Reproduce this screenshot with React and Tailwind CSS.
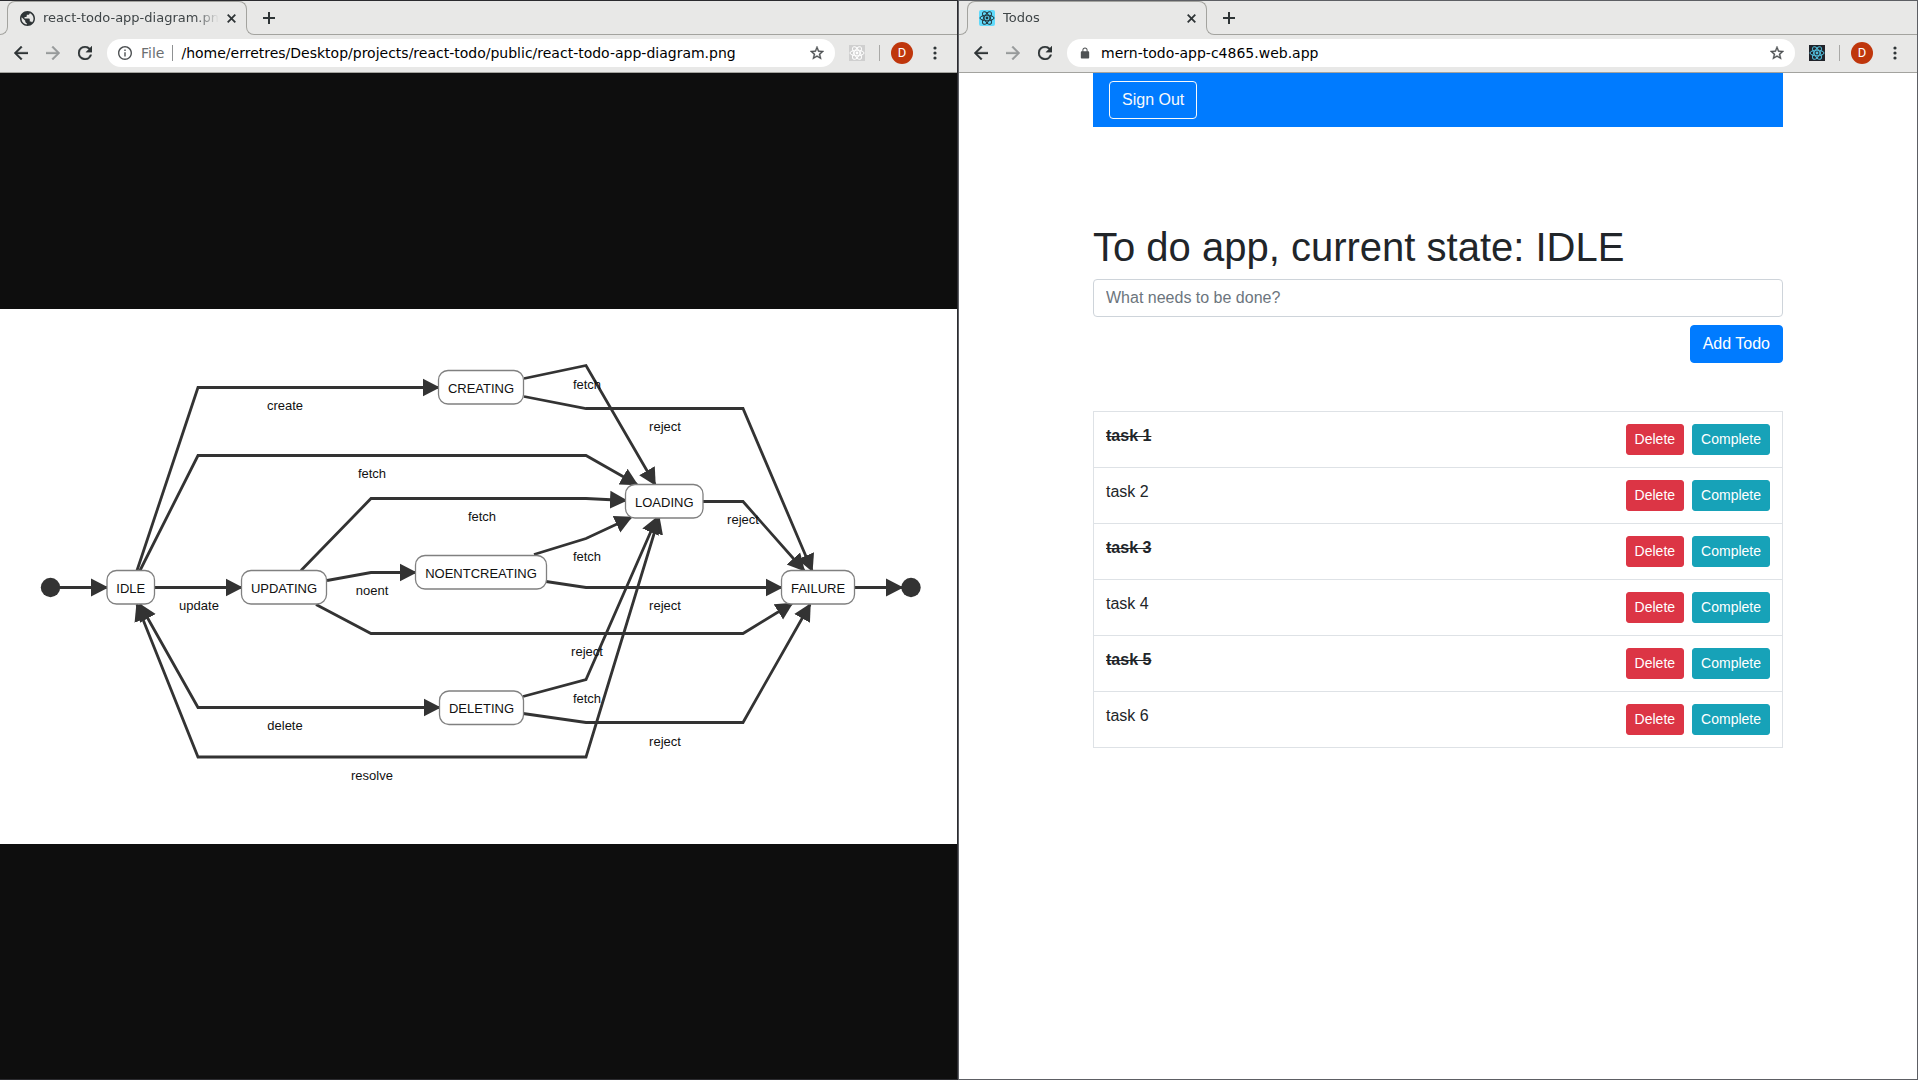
import React from "react";

const INK = "#2e3436";

function ReactLogo({ color, size }) {
  return (
    <svg width={size} height={size} viewBox="0 0 16 16" fill="none" stroke={color} strokeWidth="1" aria-hidden="true">
      <ellipse cx="8" cy="8" rx="7" ry="2.8" />
      <ellipse cx="8" cy="8" rx="7" ry="2.8" transform="rotate(60 8 8)" />
      <ellipse cx="8" cy="8" rx="7" ry="2.8" transform="rotate(120 8 8)" />
      <circle cx="8" cy="8" r="1.4" fill={color} stroke="none" />
    </svg>
  );
}

function GlobeIcon() {
  return (
    <svg width="15" height="15" viewBox="2 2 20 20" fill={INK} aria-hidden="true">
      <path d="M12 2C6.48 2 2 6.48 2 12s4.48 10 10 10 10-4.48 10-10S17.52 2 12 2zm-1 17.93c-3.95-.49-7-3.85-7-7.93 0-.62.08-1.21.21-1.79L9 15v1c0 1.100.9 2 2 2v1.930zm6.900-2.540c-.26-.81-1-1.390-1.900-1.390h-1v-3c0-.55-.45-1-1-1H8v-2h2c.55 0 1-.45 1-1V7h2c1.100 0 2-.9 2-2v-.410c2.930 1.190 5 4.060 5 7.410 0 2.080-.8 3.970-2.100 5.390z" />
    </svg>
  );
}

function BackIcon() {
  return (
    <svg width="14" height="14" viewBox="4 4 16 16" fill={INK} stroke={INK} strokeWidth="0.4" aria-hidden="true">
      <path d="M20 11H7.830l5.590-5.590L12 4l-8 8 8 8 1.410-1.410L7.830 13H20z" />
    </svg>
  );
}

function ForwardIcon() {
  return (
    <svg width="14" height="14" viewBox="4 4 16 16" fill="#979a9b" stroke="#979a9b" strokeWidth="0.4" aria-hidden="true">
      <path d="m12 4-1.410 1.410L16.170 11H4v2h12.170l-5.580 5.590L12 20l8-8z" />
    </svg>
  );
}

function ReloadIcon() {
  return (
    <svg width="14" height="14" viewBox="4 4 16 16" fill={INK} stroke={INK} strokeWidth="0.4" aria-hidden="true">
      <path d="M17.650 6.350A7.960 7.960 0 0 0 12 4a8 8 0 1 0 7.730 10h-2.080A6 6 0 1 1 12 6c1.660 0 3.140.690 4.220 1.780L13 11h7V4z" />
    </svg>
  );
}

function InfoIcon() {
  return (
    <svg width="14" height="14" viewBox="2 2 20 20" fill="#4f5254" aria-hidden="true">
      <path d="M11 7h2v2h-2zm0 4h2v6h-2zm1-9C6.480 2 2 6.480 2 12s4.480 10 10 10 10-4.480 10-10S17.520 2 12 2m0 18c-4.410 0-8-3.590-8-8s3.590-8 8-8 8 3.590 8 8-3.590 8-8 8" />
    </svg>
  );
}

function LockIcon() {
  return (
    <svg width="14" height="12" viewBox="-1 0 26 23" fill="#4f5254" aria-hidden="true">
      <path d="M18 8h-1V6c0-2.760-2.240-5-5-5S7 3.240 7 6v2H6c-1.100 0-2 .9-2 2v10c0 1.100.9 2 2 2h12c1.100 0 2-.9 2-2V10c0-1.100-.9-2-2-2m-2.900 0H8.900V6c0-1.710 1.390-3.100 3.100-3.100s3.100 1.390 3.100 3.100z" />
    </svg>
  );
}

function StarIcon() {
  return (
    <svg width="14" height="14" viewBox="2 2 20 20" fill="#4f5254" stroke="#4f5254" strokeWidth="0.5" aria-hidden="true">
      <path d="m22 9.240-7.190-.620L12 2 9.190 8.630 2 9.240l5.460 4.730L5.820 21 12 17.270 18.180 21l-1.630-7.030zM12 15.400l-3.760 2.270 1-4.280-3.320-2.880 4.380-.380L12 6.100l1.710 4.040 4.380.380-3.320 2.880 1 4.280z" />
    </svg>
  );
}

function Tab({ icon, title }) {
  return (
    <div className="flex h-[34px] shrink-0 bg-[#e8e8e7]">
      <div className="h-6 w-[9px] shrink-0 self-end rounded-br-lg border-r border-b border-[#a3a39f]" />
      <div className="relative -mx-px flex w-[240px] min-w-0 items-center pl-3 pr-2">
        <span className="pointer-events-none absolute inset-x-0 top-0 h-3 rounded-t-lg border-x border-t border-[#a3a39f]" />
        <span className="flex w-4 shrink-0 justify-center">{icon}</span>
        <span className="ml-2 min-w-0 flex-1 overflow-hidden whitespace-nowrap text-[13px] leading-4 text-[#3f4547] [mask-image:linear-gradient(to_right,black_calc(100%-24px),transparent)]">
          {title}
        </span>
        <button type="button" aria-label="Close tab" className="ml-1 flex size-4 shrink-0 items-center justify-center">
          <svg width="9" height="9" viewBox="0 0 9 9" stroke={INK} strokeWidth="1.800" aria-hidden="true">
            <path d="m.7.7 7.600 7.600M8.300.7.7 8.300" />
          </svg>
        </button>
      </div>
      <div className="h-6 w-2 shrink-0 self-end rounded-bl-lg border-b border-l border-[#a3a39f]" />
    </div>
  );
}

function BrowserWindow({ frame, tabIcon, title, address, url, extension, children }) {
  return (
    <section className={"flex min-w-0 flex-1 flex-col border " + frame}>
      <header className="bg-[#e8e8e7] font-['DejaVu_Sans',sans-serif]">
        <div className="flex">
          <Tab icon={tabIcon} title={title} />
          <div className="flex flex-1 items-center border-b border-[#a3a39f]">
            <button type="button" aria-label="New tab" className="ml-[7px] flex size-4 items-center justify-center">
              <svg width="12" height="12" viewBox="0 0 12 12" stroke={INK} strokeWidth="2" aria-hidden="true">
                <path d="M6 0v12M0 6h12" />
              </svg>
            </button>
          </div>
        </div>
        <div className="flex h-[38px] items-center border-b border-[#a3a39f] pb-px pl-[15px] pr-5">
          <nav className="flex gap-[18px]">
            <button type="button" aria-label="Back"><BackIcon /></button>
            <button type="button" aria-label="Forward"><ForwardIcon /></button>
            <button type="button" aria-label="Reload"><ReloadIcon /></button>
          </nav>
          <div className="ml-[15px] flex h-7 min-w-0 flex-1 items-center rounded-full bg-white px-[11px] text-sm">
            {address}
            <input
              aria-label="Address"
              defaultValue={url}
              className="min-w-0 flex-1 bg-transparent text-black outline-none"
            />
            <button type="button" aria-label="Bookmark"><StarIcon /></button>
          </div>
          <button type="button" aria-label="React Developer Tools" className="ml-[14px]">{extension}</button>
          <span className="ml-[14px] h-4 w-px bg-[#a9a9a7]" />
          <button
            type="button"
            aria-label="Profile"
            className="ml-[11px] flex size-[22px] items-center justify-center rounded-full bg-[#bf360c] font-[Roboto,sans-serif] text-[13px] text-white"
          >
            D
          </button>
          <button type="button" aria-label="Menu" className="ml-5">
            <svg width="4" height="14" viewBox="0 0 4 14" fill={INK} aria-hidden="true">
              <circle cx="2" cy="2" r="1.600" />
              <circle cx="2" cy="7" r="1.600" />
              <circle cx="2" cy="12" r="1.600" />
            </svg>
          </button>
        </div>
      </header>
      {children}
    </section>
  );
}

const NODES = [
  { name: "IDLE", x: 108, y: 262, w: 47.5 },
  { name: "UPDATING", x: 242.5, y: 262, w: 85 },
  { name: "CREATING", x: 439.5, y: 62, w: 85 },
  { name: "NOENTCREATING", x: 416.5, y: 247, w: 131 },
  { name: "DELETING", x: 440.5, y: 382.5, w: 84 },
  { name: "LOADING", x: 626.5, y: 176, w: 77.5 },
  { name: "FAILURE", x: 782.5, y: 262, w: 73 },
];

const EDGES = [
  { points: "60,279 108,279", end: true },
  { points: "138,262 199,79 439.5,79", end: true },
  { points: "141,262 199,147 587,147 638,176", end: true },
  { points: "155,279 242.5,279", end: true },
  { points: "302,262 372,190 587,190 627,192", end: true },
  { points: "328,272 372,264 416.5,264", end: true },
  { points: "317,296 372,325 744,325 793,295", end: true },
  { points: "525,70 587,57 656,176", end: true },
  { points: "525,88 587,100 744,100 813,262", end: true },
  { points: "704,193 744,193 805,262", end: true },
  { points: "535,246 587,230 632,209", end: true },
  { points: "547,273 587,279 782.5,279", end: true },
  { points: "141,296 199,399 440.5,399", start: true, end: true },
  { points: "138,296 199,448.500 587,448.500 660,209", start: true, end: true },
  { points: "524,388 587,371 658,209", end: true },
  { points: "524,405 587,414 744,414 811,296", end: true },
  { points: "856,279 903,279", end: true },
];

const LABELS = [
  ["create", 286, 101],
  ["fetch", 373, 169],
  ["fetch", 483, 212],
  ["update", 200, 301],
  ["noent", 373, 286],
  ["fetch", 588, 80],
  ["reject", 666, 122],
  ["reject", 744, 215],
  ["fetch", 588, 252],
  ["reject", 666, 301],
  ["reject", 588, 347],
  ["fetch", 588, 394],
  ["reject", 666, 437],
  ["delete", 286, 421],
  ["resolve", 373, 471],
];

function StateDiagram() {
  return (
    <svg
      viewBox="0 0.5 958 535"
      role="img"
      aria-label="State diagram"
      className="block w-full bg-white font-['Liberation_Sans',Arial,sans-serif] text-[13px]"
    >
      <defs>
        <marker id="arrow" markerUnits="userSpaceOnUse" markerWidth="18" markerHeight="20" refX="16" refY="10" orient="auto-start-reverse">
          <path d="M0 1 17.500 10 0 19z" fill="#333333" />
        </marker>
      </defs>
      <circle cx="51.500" cy="279" r="9.700" fill="#333333" />
      <circle cx="912" cy="279" r="9.700" fill="#333333" />
      {EDGES.map((edge) => (
        <polyline
          key={edge.points}
          points={edge.points}
          fill="none"
          stroke="#333333"
          strokeWidth="2.800"
          markerStart={edge.start ? "url(#arrow)" : undefined}
          markerEnd={edge.end ? "url(#arrow)" : undefined}
        />
      ))}
      {NODES.map((node) => (
        <g key={node.name}>
          <rect x={node.x} y={node.y} width={node.w} height="33.500" rx="9.500" fill="#ffffff" stroke="#808080" strokeWidth="1.300" />
          <text x={node.x + node.w / 2} y={node.y + 22} textAnchor="middle" fill="#111111">{node.name}</text>
        </g>
      ))}
      {LABELS.map(([text, x, y]) => (
        <text key={x + "-" + y} x={x} y={y} textAnchor="middle" fill="#111111">{text}</text>
      ))}
    </svg>
  );
}

const TASKS = [
  { title: "task 1", done: true },
  { title: "task 2", done: false },
  { title: "task 3", done: true },
  { title: "task 4", done: false },
  { title: "task 5", done: true },
  { title: "task 6", done: false },
];

function TodoPage() {
  return (
    <main className="flex-1 bg-white font-['Liberation_Sans',Arial,sans-serif] text-base text-[#212529]">
      <div className="mx-auto max-w-[720px] px-[15px]">
        <nav className="flex bg-[#007bff] px-4 py-2">
          <button type="button" className="rounded-sm border border-[#f8f9fa] px-3 py-1.5 text-[#f8f9fa]">
            Sign Out
          </button>
        </nav>
        <h1 className="mt-24 mb-2 text-[40px] leading-[48px]">To do app, current state: IDLE</h1>
        <form className="flex flex-col items-end gap-2" onSubmit={(event) => event.preventDefault()}>
          <input
            type="text"
            aria-label="New todo"
            placeholder="What needs to be done?"
            className="w-full rounded-sm border border-[#ced4da] bg-white px-3 py-1.5 placeholder:text-[#6c757d]"
          />
          <button type="submit" className="rounded-sm border border-[#007bff] bg-[#007bff] px-3 py-1.5 text-white">
            Add Todo
          </button>
        </form>
        <table className="mt-12 w-full border-collapse border border-[#dee2e6]">
          <tbody>
            {TASKS.map((task) => (
              <tr key={task.title} className="border-t border-[#dee2e6]">
                <td className="p-3 align-top">
                  {task.done ? <s className="font-bold">{task.title}</s> : task.title}
                </td>
                <td className="p-3">
                  <div className="flex justify-end gap-2 text-sm leading-[21px] text-white">
                    <button type="button" className="rounded-[3px] border border-[#dc3545] bg-[#dc3545] px-2 py-1">Delete</button>
                    <button type="button" className="rounded-[3px] border border-[#17a2b8] bg-[#17a2b8] px-2 py-1">Complete</button>
                  </div>
                </td>
              </tr>
            ))}
          </tbody>
        </table>
      </div>
    </main>
  );
}

export default function App() {
  return (
    <div className="flex min-h-screen overflow-hidden bg-white">
      <BrowserWindow
        frame="-ml-0.5 border-[#2b2b2f]"
        tabIcon={<GlobeIcon />}
        title="react-todo-app-diagram.png"
        url="/home/erretres/Desktop/projects/react-todo/public/react-todo-app-diagram.png"
        address={
          <>
            <InfoIcon />
            <span className="ml-[9px] text-[#6b6e70]">File</span>
            <span className="mx-2 h-4 w-px bg-[#8f9192]" />
          </>
        }
        extension={
          <span className="flex size-4 items-center justify-center bg-[#cfcfcf]">
            <ReactLogo color="#ffffff" size={16} />
          </span>
        }
      >
        <div className="flex flex-1 flex-col justify-center bg-[#0e0e0e] pt-px">
          <StateDiagram />
        </div>
      </BrowserWindow>
      <BrowserWindow
        frame="border-[#5d5f64]"
        tabIcon={
          <span className="flex size-4 items-center justify-center rounded-xs bg-[#61dafb]">
            <ReactLogo color="#20333b" size={16} />
          </span>
        }
        title="Todos"
        url="mern-todo-app-c4865.web.app"
        address={
          <span className="mr-[9px] flex">
            <LockIcon />
          </span>
        }
        extension={
          <span className="flex size-4 items-center justify-center bg-[#20232a]">
            <ReactLogo color="#53c1de" size={16} />
          </span>
        }
      >
        <TodoPage />
      </BrowserWindow>
    </div>
  );
}
